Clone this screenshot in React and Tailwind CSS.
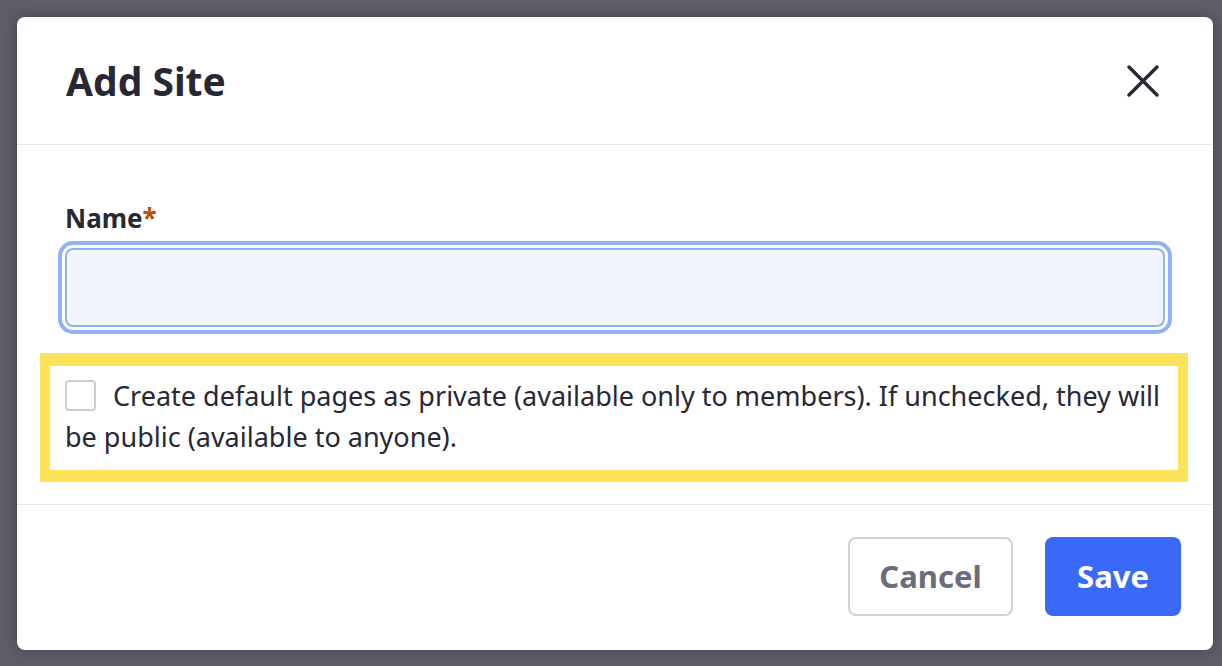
import React from "react";

export default function App() {
  const font = { fontFamily: '"Noto Sans", "Open Sans", sans-serif' };
  return (
    <div className="w-full h-[666px] bg-[#5e5e6a] pt-[17px] pl-[17px]" style={font}>
      <div className="w-[1196px] h-[633px] bg-white rounded-[8px] shadow-[0_0_14px_rgba(0,0,0,0.3)] flex flex-col overflow-hidden">
        <div className="h-[128px] border-b border-[#e7e7ed] flex items-center justify-between pl-[49px] pr-[54px] shrink-0">
          <h1 className="text-[39px] font-bold text-[#272833] leading-none">Add Site</h1>
          <svg width="32" height="32" viewBox="0 0 32 32" className="block">
            <path d="M2 2 L30 30 M30 2 L2 30" stroke="#272833" strokeWidth="3.4" strokeLinecap="round" fill="none" />
          </svg>
        </div>
        <div className="px-[48px] pt-[58px] pb-[22px] border-b border-[#e7e7ed] shrink-0">
          <div className="text-[26px] leading-[30px] font-bold text-[#272833]">
            Name<span className="text-[#b95000]">*</span>
          </div>
          <div className="mt-[15px] h-[79px] rounded-[8px] border-2 border-[#8fb0fa] bg-[#f0f5fe] shadow-[0_0_0_3px_#ffffff,0_0_0_7px_#8fb0fa]" />
          <div className="mt-[26px] -ml-[25px] -mr-[23px] border-[#fde35a] border-t-[13px] border-b-[12px] border-x-[10px] pl-[15px] pr-[8px] pt-[9px] pb-[13px]">
            <p className="text-[27px] leading-[41px] text-[#272833]">
              <span className="inline-block w-[31px] h-[31px] rounded-[4px] border-2 border-[#cdcdd8] bg-white align-middle relative -top-[3px] mr-[17px]" />
              Create default pages as private (available only to members). If unchecked, they will be public (available to anyone).
            </p>
          </div>
        </div>
        <div className="flex-1 flex items-start justify-end gap-[32px] pt-[32px] pr-[32px]">
          <button className="w-[165px] h-[79px] rounded-[8px] border-2 border-[#cfd0db] bg-white text-[31px] font-bold text-[#6b6c7e]">
            Cancel
          </button>
          <button className="w-[136px] h-[79px] rounded-[8px] bg-[#3b69f7] text-[31px] font-bold text-white">
            Save
          </button>
        </div>
      </div>
    </div>
  );
}
